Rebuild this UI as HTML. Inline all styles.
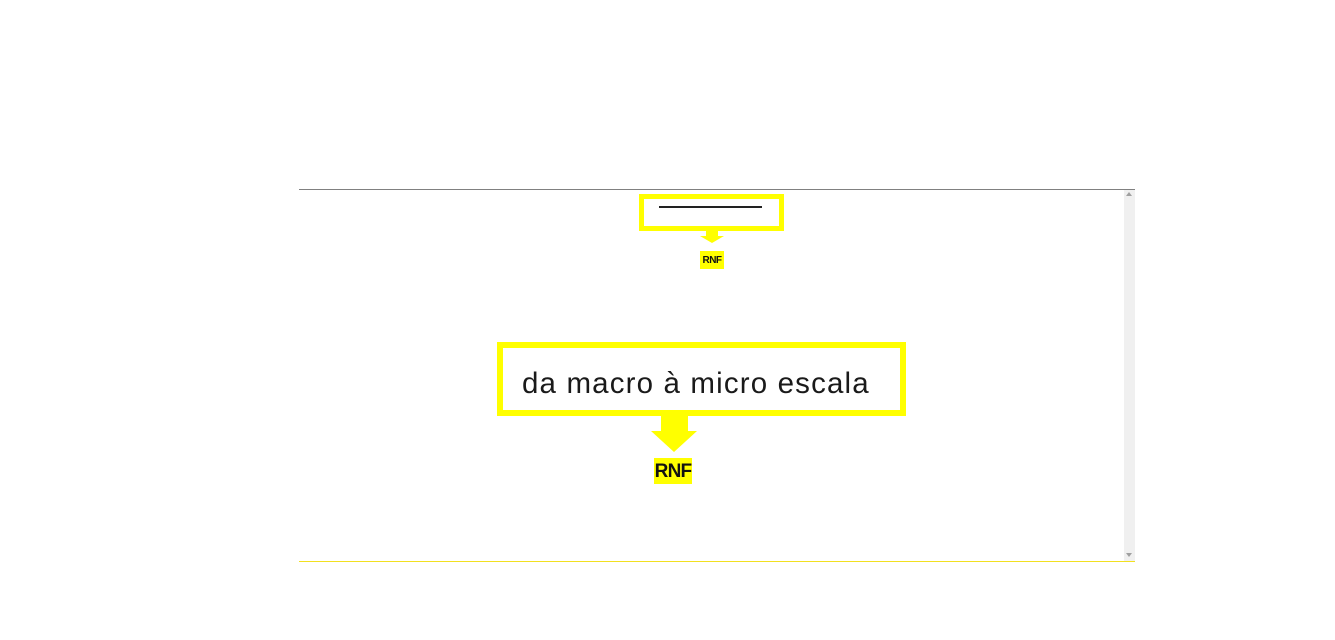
<!DOCTYPE html>
<html><head><meta charset="utf-8"><style>
html,body{margin:0;padding:0;background:#fff;width:1335px;height:640px;overflow:hidden;position:relative;font-family:"Liberation Sans",sans-serif}
div{position:absolute;box-sizing:border-box}
</style></head><body>
<div style="left:299px;top:189px;width:836px;height:1px;background:#808080"></div>
<div style="left:1124px;top:190px;width:11px;height:371px;background:#f0f0f0"></div>
<div style="left:1126px;top:192px;width:0;height:0;border-left:3px solid transparent;border-right:3px solid transparent;border-bottom:4px solid #a0a0a0"></div>
<div style="left:1126px;top:553px;width:0;height:0;border-left:3px solid transparent;border-right:3px solid transparent;border-top:4px solid #a0a0a0"></div>
<div style="left:299px;top:561px;width:836px;height:1px;background:#f2e020"></div>

<!-- small box -->
<div style="left:639px;top:194px;width:145px;height:37px;border:5px solid #ffff00"></div>
<div style="left:659px;top:206px;width:103px;height:2px;background:#222"></div>
<div style="left:706px;top:231px;width:12px;height:5px;background:#ffff00"></div>
<div style="left:700px;top:236px;width:0;height:0;border-left:12px solid transparent;border-right:12px solid transparent;border-top:7px solid #ffff00"></div>
<div style="left:700px;top:251px;width:24px;height:18px;background:#ffff00;font-weight:bold;font-size:10px;letter-spacing:-0.5px;line-height:19px;text-align:center;color:#111">RNF</div>

<!-- big box -->
<div style="left:497px;top:342px;width:409px;height:74px;border:6px solid #ffff00"></div>
<div style="left:522px;top:364px;font-size:29.5px;letter-spacing:1.15px;line-height:40px;color:#1a1a1a;white-space:nowrap">da macro à micro escala</div>
<div style="left:661px;top:416px;width:27px;height:16px;background:#ffff00"></div>
<div style="left:651px;top:431px;width:0;height:0;border-left:23.5px solid transparent;border-right:23.5px solid transparent;border-top:21px solid #ffff00"></div>
<div style="left:654px;top:458px;width:38px;height:26px;background:#ffff00;font-weight:bold;font-size:19px;letter-spacing:-0.8px;line-height:27px;text-align:center;color:#111">RNF</div>
</body></html>
